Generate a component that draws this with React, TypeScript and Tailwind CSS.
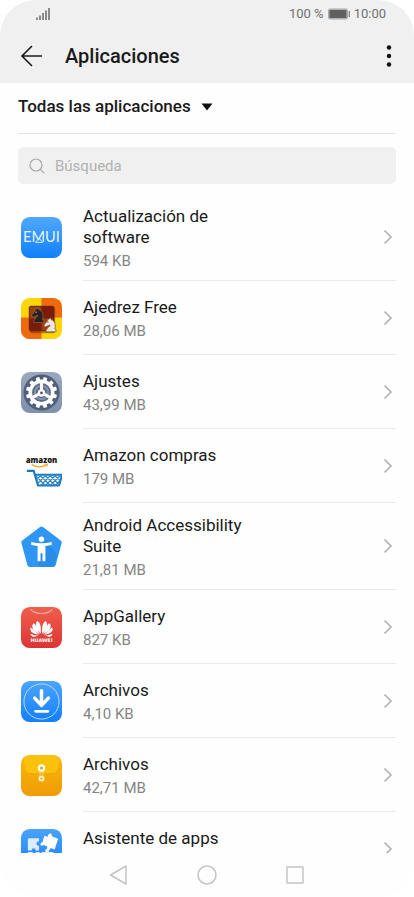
import type { ReactNode } from "react";

interface AppEntry {
  id: string;
  name: string;
  size: string;
  icon: ReactNode;
}

function EmuiIcon() {
  return (
    <svg viewBox="0 0 42 42" className="size-full" aria-hidden="true">
      <defs>
        <linearGradient id="emui-bg" x1="0" y1="0" x2="0" y2="1">
          <stop offset="0" stopColor="#50a8fd" />
          <stop offset="1" stopColor="#1180fb" />
        </linearGradient>
      </defs>
      <rect width="42" height="42" rx="9" fill="url(#emui-bg)" />
      <text x="21" y="26" textAnchor="middle" fontFamily="Lato, sans-serif" fontWeight="400" fontSize="15" fill="#e8f4ff">
        EMUI
      </text>
      <path d="M15 26l3.500-4.500 3.500 4.500z" fill="none" stroke="#e8f4ff" strokeWidth="0.900" />
    </svg>
  );
}

const KNIGHT =
  "M3 17h12v-2.500l-1.500-1C15 9 14 4 9 2.500L8.500 0 6.500 2.200 5 1.500 4.500 4 .5 9l1.500 2.500 4-2 2-.5c-.5 2-3.500 3-4 5L3 14.500z";

function ChessIcon() {
  return (
    <svg viewBox="0 0 42 42" className="size-full" aria-hidden="true">
      <defs>
        <clipPath id="chess-clip">
          <rect width="42" height="42" rx="9" />
        </clipPath>
      </defs>
      <g clipPath="url(#chess-clip)">
        <rect width="42" height="42" fill="#fed509" />
        <rect x="21" width="21" height="20" fill="#f0690f" />
        <rect y="20" width="21" height="22" fill="#f0690f" />
      </g>
      <rect x="9" y="9" width="26" height="27" rx="2" fill="#6d2908" opacity="0.500" />
      <rect x="8.500" y="8.500" width="25" height="25" rx="1.500" fill="#a93a0b" stroke="#4c2411" />
      <rect x="21" y="9" width="12" height="12" fill="#7c1b0b" />
      <rect x="9" y="21" width="12" height="12" fill="#7c1b0b" />
      <path d={KNIGHT} transform="translate(10.500 9.500) scale(.85 .92)" fill="#29211f" stroke="#8e735e" strokeWidth="0.700" />
      <path d={KNIGHT} transform="translate(23 20) scale(.86)" fill="#f0e5dc" stroke="#5b3d2c" strokeWidth="0.700" />
      <circle cx="15.500" cy="14.500" r="0.700" fill="#e2c9a9" />
      <circle cx="27.500" cy="24.500" r="0.600" fill="#5b3d2c" />
    </svg>
  );
}

const TEETH = [15, 45, 75, 105, 135, 165, 195, 225, 255, 285, 315, 345];

function SettingsIcon() {
  return (
    <svg viewBox="0 0 42 42" className="size-full" aria-hidden="true">
      <defs>
        <linearGradient id="settings-bg" x1="0" y1="0" x2="0" y2="1">
          <stop offset="0" stopColor="#9ba8bd" />
          <stop offset="1" stopColor="#7f90ad" />
        </linearGradient>
      </defs>
      <rect width="42" height="42" rx="9" fill="url(#settings-bg)" />
      <circle cx="21" cy="21" r="18.500" fill="#525f7b" />
      <circle cx="21" cy="21" r="11.500" fill="#5f6d89" stroke="#fff" strokeWidth="3.600" />
      <circle cx="21" cy="21" r="6.800" fill="none" stroke="#8593ad" strokeWidth="2" />
      {TEETH.map((angle) => (
        <rect key={angle} x="19" y="5" width="4" height="5" rx="1" fill="#fff" transform={`rotate(${angle} 21 21)`} />
      ))}
      {[0, 120, 240].map((angle) => (
        <path key={angle} d="M21 21V9" stroke="#fff" strokeWidth="3" transform={`rotate(${angle} 21 21)`} />
      ))}
      <circle cx="21" cy="21.500" r="3.800" fill="#fff" />
      <circle cx="21" cy="21.500" r="1.500" fill="#525f7b" />
    </svg>
  );
}

function AmazonIcon() {
  return (
    <svg viewBox="0 0 42 42" className="size-full" aria-hidden="true">
      <text x="21" y="17.500" textAnchor="middle" fontFamily="'Open Sans', sans-serif" fontWeight="800" fontSize="8" fill="#171717">
        amazon
      </text>
      <path d="M11 19c4.500 3 11 3 15 .3" fill="none" stroke="#f6a21b" strokeWidth="1.300" />
      <path d="M24 18.700l3.200-.3-1 3" fill="none" stroke="#f6a21b" strokeWidth="1" />
      <path d="M6 25.500h7l4.500 15h22" fill="none" stroke="#1c79bc" strokeWidth="2.200" />
      <path d="M14 29.500h28l-3 11" fill="none" stroke="#1c79bc" strokeWidth="2.200" />
      <path
        d="M15 30.500l10 10M20 30.500l10 10M25 30.500l10 10M30 30.500l9 9M35 30.500l5 5M20 30.500l-4 4M25 30.500l-8 8M30 30.500l-10 10M35 30.500l-10 10M40 30.500l-10 10M40 35.500l-5 5"
        fill="none"
        stroke="#2b86c4"
        strokeWidth="1.200"
      />
    </svg>
  );
}

function AccessibilityIcon() {
  return (
    <svg viewBox="0 0 42 42" className="size-full" aria-hidden="true">
      <path d="M19.500 1q1.500-1 3 0L41 15q1 1 .7 2.500L35.500 40q-.5 2-2.500 2H9q-2 0-2.500-2L.4 17.500Q0 16 1 15z" fill="#2f96f3" />
      <path d="M24 11l13 19-3.500 12H20l-3-4 5-17z" fill="#2788e0" opacity="0.650" />
      <circle cx="21" cy="13.500" r="2.800" fill="#fff" />
      <path d="M10.500 16.500q10.500 2.500 21 0v3l-6.500 1V36h-3v-8h-2v8h-3V20.500l-6.500-1z" fill="#fff" />
    </svg>
  );
}

function AppGalleryIcon() {
  return (
    <svg viewBox="0 0 42 42" className="size-full" aria-hidden="true">
      <defs>
        <linearGradient id="gallery-bg" x1="0" y1="0" x2="0" y2="1">
          <stop offset="0" stopColor="#f05f4c" />
          <stop offset="1" stopColor="#dc3534" />
        </linearGradient>
      </defs>
      <rect width="42" height="42" rx="9" fill="url(#gallery-bg)" />
      <path d="M10 2.500c4 5.500 18 5.500 22 0" fill="none" stroke="#fbb1a4" strokeWidth="1.200" />
      <g fill="#fff">
        {[-0.95, 0.95].map((side) => (
          <g key={side} transform={`translate(21 4.500) scale(${side} .85)`}>
            <path d="M.7 27C.5 20 .5 15 4 11.500c3.500 2 2.500 9-3.300 15.500z" />
            <path d="M1.600 27.500C4 23 5 16.500 8.500 14.300c3.500 4 .5 9-6.900 13.200z" />
            <path d="M2.700 28.200C6 25 9 21 11.700 19.500c1.500 4.500-2 7.500-9 8.700z" />
            <path d="M3.300 29.200c3.500 0 6-1.500 8.500-2.400-.8 4-3.500 5-8.500 2.400z" />
          </g>
        ))}
      </g>
      <text x="21" y="36" textAnchor="middle" fontFamily="'DejaVu Sans', sans-serif" fontWeight="700" fontSize="5" fill="#fff">
        HUAWEI
      </text>
    </svg>
  );
}

function DownloadsIcon() {
  return (
    <svg viewBox="0 0 42 42" className="size-full" aria-hidden="true">
      <defs>
        <linearGradient id="downloads-bg" x1="0" y1="0" x2="0" y2="1">
          <stop offset="0" stopColor="#4ba5fd" />
          <stop offset="1" stopColor="#147ffb" />
        </linearGradient>
      </defs>
      <rect width="42" height="42" rx="9" fill="url(#downloads-bg)" />
      <circle cx="21" cy="21" r="18" fill="none" stroke="#b9dcff" strokeWidth="1" />
      <path d="M21 10v14M14 17.500l7 7.500 7-7.500" fill="none" stroke="#fff" strokeWidth="3.600" strokeLinecap="round" strokeLinejoin="round" />
      <path d="M15 31h12.500" stroke="#fff" strokeWidth="2.800" strokeLinecap="round" />
    </svg>
  );
}

function FilesIcon() {
  return (
    <svg viewBox="0 0 42 42" className="size-full" aria-hidden="true">
      <defs>
        <linearGradient id="files-bg" x1="0" y1="0" x2="0" y2="1">
          <stop offset="0" stopColor="#f9b90a" />
          <stop offset="1" stopColor="#ef9b04" />
        </linearGradient>
      </defs>
      <rect width="42" height="42" rx="9" fill="url(#files-bg)" />
      <path d="M3 5q2-5 8-5h20q6 0 8 5l-2 11q-.6 3-4 3H9q-3.400 0-4-3z" fill="#fac20b" />
      <path d="M5 16q.6 3 4 3h24q3.400 0 4-3" fill="none" stroke="#eda506" strokeWidth="0.800" />
      <path d="M19.500 15v8M22.500 15v8" stroke="#fde29a" strokeWidth="0.800" />
      <circle cx="21" cy="13.300" r="2.700" fill="#f0a006" stroke="#fff" strokeWidth="2.200" />
      <circle cx="21" cy="24.200" r="2.100" fill="#f0a006" stroke="#fff3d0" strokeWidth="1.900" />
    </svg>
  );
}

function AssistantIcon() {
  return (
    <svg viewBox="0 0 42 42" className="size-full" aria-hidden="true">
      <defs>
        <linearGradient id="assistant-bg" x1="0" y1="0" x2="0" y2="1">
          <stop offset="0" stopColor="#4aa3fb" />
          <stop offset="1" stopColor="#147ffb" />
        </linearGradient>
      </defs>
      <rect width="42" height="42" rx="9" fill="url(#assistant-bg)" />
      <path d="M8 9.500h10.500v3.200c-3.500-.5-3.500 5 0 4.500V22h-3.500c.5-3-4.500-3-4 0H7V10.500z" fill="#d9edff" />
      <path d="M24 7l3.500 1c0-4.500 5-4.500 4-.5l6.500 2.500-3.500 11-4-1.500c-1 4-5 2-3.500-1.500L23 16.500c-3 2-4.500-2-1-3z" fill="#fff" />
      <path d="M7 23.500h5v2h3v-2h4v4.500c3-.5 3 4.500 0 4v4H7z" fill="#d9edff" />
      <path d="M21 23.500h4c-1.500-4.500 5-4.500 3.500 0H33V36H21v-4c3 .5 3-4.500 0-4z" fill="#e6f3ff" />
    </svg>
  );
}

const APPS: AppEntry[] = [
  { id: "emui", name: "Actualización de software", size: "594 KB", icon: <EmuiIcon /> },
  { id: "chess", name: "Ajedrez Free", size: "28,06 MB", icon: <ChessIcon /> },
  { id: "settings", name: "Ajustes", size: "43,99 MB", icon: <SettingsIcon /> },
  { id: "amazon", name: "Amazon compras", size: "179 MB", icon: <AmazonIcon /> },
  { id: "accessibility", name: "Android Accessibility Suite", size: "21,81 MB", icon: <AccessibilityIcon /> },
  { id: "gallery", name: "AppGallery", size: "827 KB", icon: <AppGalleryIcon /> },
  { id: "downloads", name: "Archivos", size: "4,10 KB", icon: <DownloadsIcon /> },
  { id: "files", name: "Archivos", size: "42,71 MB", icon: <FilesIcon /> },
  { id: "assistant", name: "Asistente de apps", size: "", icon: <AssistantIcon /> },
];

function StatusBar() {
  return (
    <div className="flex h-7 items-center justify-between pl-9 pr-7 text-[13px] text-[#707070]">
      <svg viewBox="0 0 14 12" className="h-3 w-3.5" aria-hidden="true">
        <path d="M1 12V9.500M4 12V7.500M7 12V5M10 12V2.500M13 12V0" stroke="#707070" strokeWidth="1.600" />
      </svg>
      <div className="flex items-center gap-1">
        <span>100 %</span>
        <svg viewBox="0 0 22 12" className="h-3 w-[22px]" aria-hidden="true">
          <rect x="0.500" y="1" width="19" height="10" rx="1.500" fill="#bdbdbd" stroke="#a6a6a6" />
          <rect x="1.500" y="2" width="17" height="8" fill="#606060" />
          <path d="M21.300 3v6" stroke="#777" strokeWidth="1.200" />
        </svg>
        <span>10:00</span>
      </div>
    </div>
  );
}

function AppRow({ app }: { app: AppEntry }) {
  return (
    <li>
      <a href={`#${app.id}`} className="flex items-stretch gap-[21px] pl-[21px] pr-[18px]">
        <span className="flex w-[41px] shrink-0 items-center">
          <span className="block size-[41px]">{app.icon}</span>
        </span>
        <span className="flex min-h-[74px] flex-1 items-center justify-between border-b border-[#e9e9e9]">
          <span className="flex max-w-[180px] flex-col gap-[3px] pb-[9px] pt-3">
            <span className="text-[17px] leading-[21px] text-[#1a1a1a]">{app.name}</span>
            <span className="h-5 text-[15px] leading-5 text-[#858585]">{app.size}</span>
          </span>
          <svg viewBox="0 0 10 16" className="mr-[3px] h-4 w-2.5 shrink-0" aria-hidden="true">
            <path d="M1.500 1.500L8 8l-6.500 6.500" fill="none" stroke="#b0b0b0" strokeWidth="1.600" />
          </svg>
        </span>
      </a>
    </li>
  );
}

function NavBar() {
  return (
    <nav className="flex h-11 shrink-0 items-center justify-center gap-[68px]">
      <button type="button" aria-label="Atrás">
        <svg viewBox="0 0 20 20" className="size-5" fill="none" stroke="#c4c4c4" strokeWidth="1.500" strokeLinejoin="round">
          <path d="M17 1v18L1.500 10z" />
        </svg>
      </button>
      <button type="button" aria-label="Inicio">
        <svg viewBox="0 0 20 20" className="size-5" fill="none" stroke="#c4c4c4" strokeWidth="1.500">
          <circle cx="10" cy="10" r="9" />
        </svg>
      </button>
      <button type="button" aria-label="Recientes">
        <svg viewBox="0 0 20 20" className="size-5" fill="none" stroke="#c4c4c4" strokeWidth="1.500">
          <rect x="2" y="2" width="16" height="16" rx="0.500" />
        </svg>
      </button>
    </nav>
  );
}

export default function App() {
  return (
    <div className="flex h-screen flex-col overflow-hidden rounded-[36px] bg-[#fefefe] font-['Roboto',sans-serif]">
      <header className="shrink-0 bg-[#f0f0f0]">
        <StatusBar />
        <div className="flex h-[55px] items-center pl-5 pr-[18px]">
          <button type="button" aria-label="Volver">
            <svg viewBox="0 0 24 24" className="size-6" fill="none" stroke="#1a1a1a" strokeWidth="1.600">
              <path d="M22 12H2M12 2L2 12l10 10" />
            </svg>
          </button>
          <h1 className="ml-[21px] flex-1 text-xl font-medium text-[#1a1a1a]">Aplicaciones</h1>
          <button type="button" aria-label="Más opciones">
            <svg viewBox="0 0 14 24" className="h-6 w-3.5" fill="#111">
              <circle cx="7" cy="3.500" r="2.200" />
              <circle cx="7" cy="12" r="2.200" />
              <circle cx="7" cy="20.500" r="2.200" />
            </svg>
          </button>
        </div>
      </header>

      <div className="shrink-0 px-[18px]">
        <div className="flex h-[51px] items-center gap-2.5 border-b border-[#e6e6e6] pb-0.5">
          <select
            aria-label="Filtrar aplicaciones"
            className="field-sizing-content appearance-none bg-transparent text-[17px] font-medium text-[#1a1a1a]"
          >
            <option>Todas las aplicaciones</option>
          </select>
          <svg viewBox="0 0 12 8" className="pointer-events-none h-2 w-3" fill="#111" aria-hidden="true">
            <path d="M0.500 0.500h11L6 7.500z" />
          </svg>
        </div>
        <label className="mb-[10px] mt-[13px] flex h-[37px] items-center gap-2.5 rounded-[5px] bg-[#f0f0f0] pl-[11px] pr-2.5 pt-px">
          <svg viewBox="0 0 16 16" className="size-4 shrink-0" fill="none" stroke="#a8a8a8" strokeWidth="1.200" aria-hidden="true">
            <circle cx="7" cy="7" r="6" />
            <path d="M11.300 11.300l4 4" />
          </svg>
          <input
            type="search"
            aria-label="Búsqueda"
            placeholder="Búsqueda"
            className="min-w-0 flex-1 bg-transparent text-[15px] outline-none placeholder:text-[#b0b0b0]"
          />
        </label>
      </div>

      <ul className="min-h-0 flex-1 overflow-hidden">
        {APPS.map((app) => (
          <AppRow key={app.id} app={app} />
        ))}
      </ul>

      <NavBar />
    </div>
  );
}
